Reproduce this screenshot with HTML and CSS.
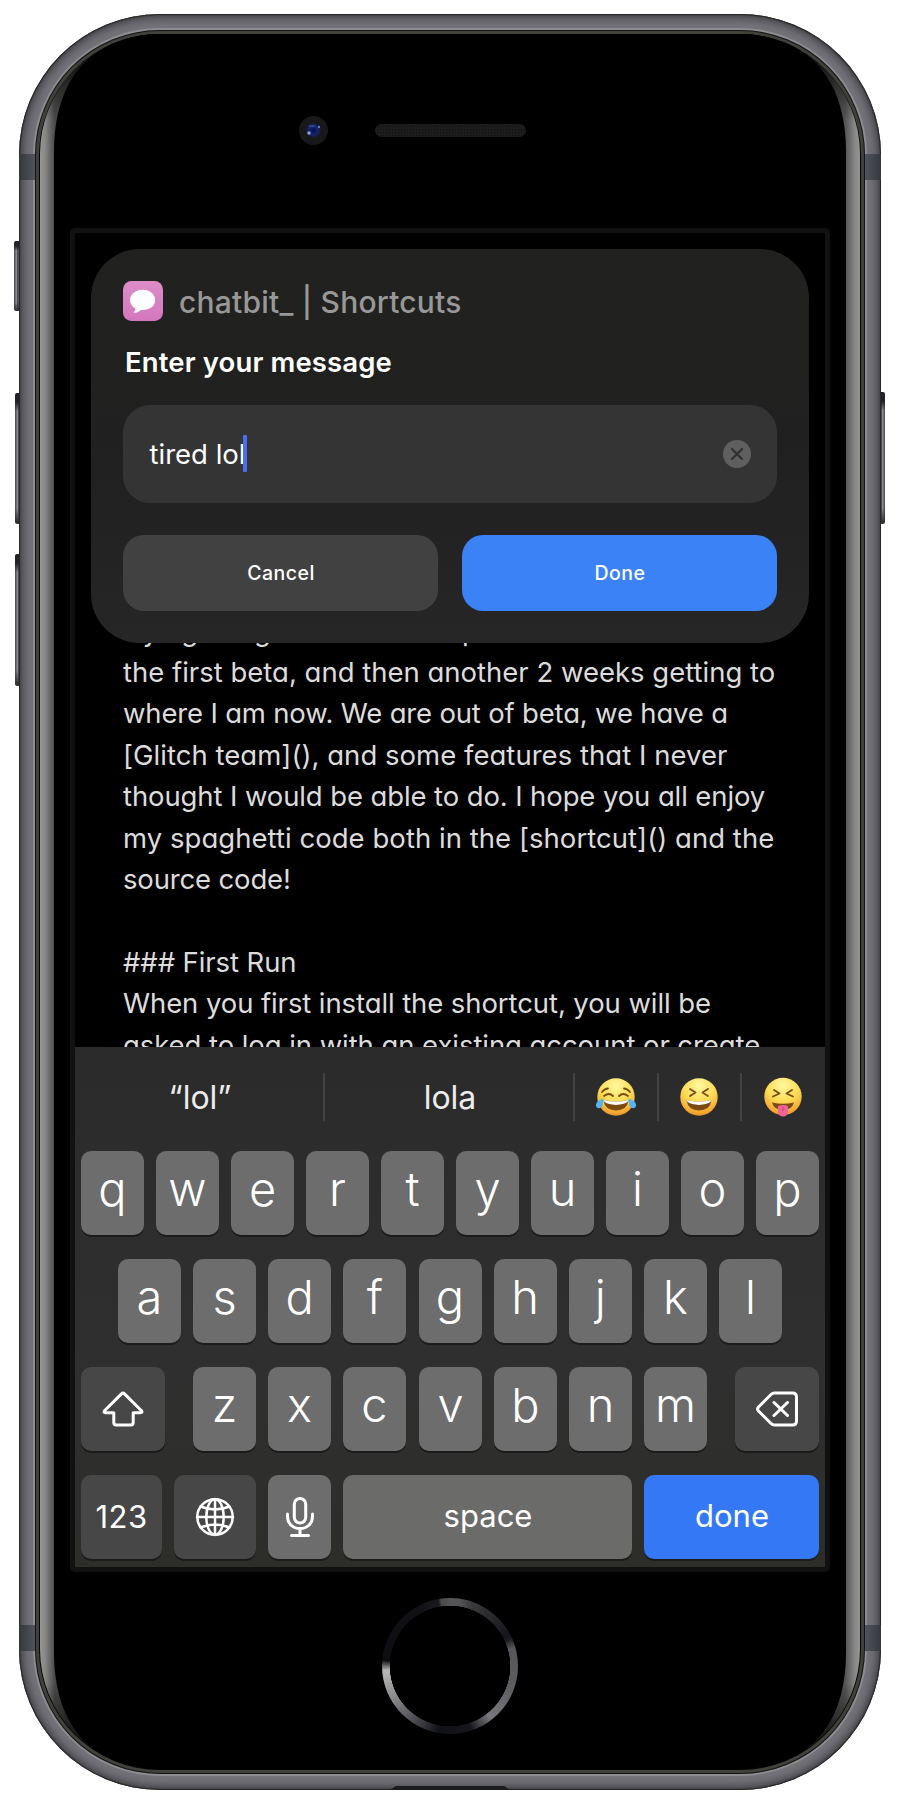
FILE: index.html
```html
<!DOCTYPE html>
<html lang="en">
<head>
<meta charset="utf-8">
<title>chatbit_ | Shortcuts</title>
<link rel="stylesheet" href="styles.css">
</head>
<body>
<div class="phone">
  <i class="side mute"></i><i class="side vol-up"></i><i class="side vol-down"></i><i class="side power"></i>
  <div class="frame"></div>
  <i class="band tl"></i><i class="band tr"></i><i class="band bl"></i><i class="band br"></i>
  <svg class="glass" viewBox="0 0 830 1744" width="830" height="1744">
    <defs>
      <linearGradient id="silver" gradientUnits="userSpaceOnUse" x1="5" y1="0" x2="825" y2="0">
        <stop offset="0" stop-color="#969696"/><stop offset=".006" stop-color="#888"/><stop offset=".018" stop-color="#4a4a4a"/>
        <stop offset=".06" stop-color="#2c2c2c"/><stop offset=".94" stop-color="#2c2c2c"/>
        <stop offset=".982" stop-color="#555"/><stop offset=".994" stop-color="#888"/><stop offset="1" stop-color="#969696"/>
      </linearGradient>
      <linearGradient id="fade" x1="0" y1="0" x2="0" y2="1">
        <stop offset="0" stop-color="#000"/><stop offset=".01" stop-color="#000" stop-opacity=".75"/><stop offset=".05" stop-color="#000" stop-opacity="0"/>
        <stop offset=".95" stop-color="#000" stop-opacity="0"/><stop offset=".99" stop-color="#000" stop-opacity=".75"/><stop offset="1" stop-color="#000"/>
      </linearGradient>
      <radialGradient id="lens"><stop offset="0" stop-color="#061050"/><stop offset=".55" stop-color="#16256c"/><stop offset="1" stop-color="#151a30"/></radialGradient>
      <pattern id="mesh" width="3" height="3" patternUnits="userSpaceOnUse"><rect width="3" height="3" fill="#1d1d1d"/><rect width="1.4" height="1.4" fill="#131313"/></pattern>
    </defs>
    <rect width="830" height="1744" rx="125" fill="#141414"/>
    <rect x="1" y="1" width="828" height="1742" rx="124" fill="#41413b"/>
    <rect x="4" y="4" width="822" height="1736" rx="121" fill="#050505"/>
    <rect x="5" y="4" width="820" height="1735" rx="120" fill="url(#silver)"/>
    <rect x="5" y="4" width="820" height="1735" rx="120" fill="url(#fade)"/>
    <path d="M19 122C19 55 50 10 118 4H712C780 10 811 55 811 122V1622C811 1689 780 1734 712 1739H118C50 1734 19 1689 19 1622Z" fill="#000"/>
    <circle cx="278.500" cy="100.500" r="14.500" fill="#181818"/>
    <circle cx="278.500" cy="100.500" r="7.500" fill="url(#lens)"/>
    <circle cx="274" cy="103" r="1.700" fill="#8ea6d6"/><circle cx="284" cy="97" r="1.200" fill="#4f86ba"/><ellipse cx="277" cy="96" rx="3.500" ry="1.200" fill="#2a4090"/>
    <rect x="340" y="94" width="151" height="13" rx="6.500" fill="url(#mesh)"/>
  </svg>
  <i class="port"></i>

  <div class="screen">
    <div class="content">
      <div class="note">
        <div>trying things out to develop</div>
        <div class="l1">the first beta, and then another 2 weeks getting to</div>
        <div class="l2">where I am now. We are out of beta, we have a</div>
        <div class="l3">[Glitch team](), and some features that I never</div>
        <div class="l4">thought I would be able to do. I hope you all enjoy</div>
        <div class="l5">my spaghetti code both in the [shortcut]() and the</div>
        <div class="l6">source code!</div>
        <div>&nbsp;</div>
        <div class="l7">### First Run</div>
        <div class="l8">When you first install the shortcut, you will be</div>
        <div class="l9">asked to log in with an existing account or create</div>
      </div>
      <div class="card">
        <div class="head">
          <svg class="app" viewBox="0 0 40 40"><defs><linearGradient id="pk" x1="0" y1="0" x2="0" y2="1"><stop offset="0" stop-color="#dd8cc9"/><stop offset="1" stop-color="#d477bd"/></linearGradient></defs><rect width="40" height="40" rx="8.500" fill="url(#pk)"/><path d="M19.800 8.800C12.700 8.800 7 13.200 7 19c0 3.800 2.200 6.700 5.400 8.400.3 1.500-.7 2.500-1.500 3.500-.5.800.2 1.200 1 .9 2.600-.4 4.400-1.600 6-2.900 8.600.5 14.300-3.800 14.300-9.900 0-5.800-5.400-10.200-12.400-10.200z" fill="#fff"/></svg>
          <span class="title">chatbit_ | Shortcuts</span>
        </div>
        <div class="prompt">Enter your message</div>
        <div class="field"><span class="value">tired lol</span><i class="caret"></i>
          <svg class="clear" viewBox="0 0 28 28"><circle cx="14" cy="14" r="14" fill="#5f5f5f"/><path d="M9 9l10 10M19 9L9 19" stroke="#303030" stroke-width="2.200" stroke-linecap="round"/></svg>
        </div>
        <div class="actions"><div class="btn">Cancel</div><div class="btn primary">Done</div></div>
      </div>
    </div>

    <div class="keyboard">
      <div class="suggest">
        <div class="word">“lol”</div><i></i><div class="word w2">lola</div><i></i>
        <div class="emo"><svg width="42" height="40" viewBox="-21 -20 42 40"><defs>
          <radialGradient id="face" cx=".5" cy=".2" r=".85"><stop offset="0" stop-color="#fff8a0"/><stop offset=".5" stop-color="#fddc55"/><stop offset=".85" stop-color="#f3a832"/><stop offset="1" stop-color="#dd8322"/></radialGradient></defs>
          <circle r="18.700" fill="url(#face)"/><path d="M-12.500 3Q0 6 12.500 3Q11 13.500 0 13.500T-12.500 3Z" fill="#7a4a12"/><path d="M-12.500 3Q0 6 12.500 3Q12 7 0 8Q-12 7-12.500 3Z" fill="#fff"/>
          <path d="M-12-1Q-7-5-3-1M3-1Q7-5 12-1M-14-5Q-11-8.500-8-8.500M14-5Q11-8.500 8-8.500" fill="none" stroke="#7a4a12" stroke-width="1.800" stroke-linecap="round"/>
          <path d="M-12.500 1.500C-18 3-20.500 6-20 9c1 3.500 5.500 2.500 6.500-.5.600-2 .8-4.500 1-7zM12.500 1.500C18 3 20.500 6 20 9c-1 3.500-5.500 2.500-6.500-.5-.6-2-.8-4.500-1-7z" fill="#55b5f2"/></svg></div><i></i>
        <div class="emo"><svg width="42" height="40" viewBox="-21 -20 42 40"><circle r="18.700" fill="url(#face)"/><path d="M-12.500 3Q0 6 12.500 3Q11 13.500 0 13.500T-12.500 3Z" fill="#7a4a12"/><path d="M-12.500 3Q0 6 12.500 3Q12 7 0 8Q-12 7-12.500 3Z" fill="#fff"/><path d="M-9-8L-3.500-4.500L-9-1M9-8L3.500-4.500L9-1" fill="none" stroke="#7a4a12" stroke-width="1.800" stroke-linecap="round" stroke-linejoin="round"/></svg></div><i></i>
        <div class="emo"><svg width="42" height="40" viewBox="-21 -20 42 40"><circle r="18.700" cy="-.5" fill="url(#face)"/><path d="M-11 5.500Q0 8 11 5.500Q9 13 0 13T-11 5.500Z" fill="#7a4a12"/><path d="M-5 9Q0 7 5 9V14Q4.500 19.500 0 19.500T-5 14Z" fill="#f0629a"/><path d="M0 10V14" stroke="#c83f78" stroke-width="1"/><path d="M-9-7L-3.500-3.500L-10-.5M9-7L3.500-3.500L10-.5" fill="none" stroke="#7a4a12" stroke-width="1.800" stroke-linecap="round" stroke-linejoin="round"/></svg></div>
      </div>
      <div class="row"><b>q</b><b>w</b><b>e</b><b>r</b><b>t</b><b>y</b><b>u</b><b>i</b><b>o</b><b>p</b></div>
      <div class="row r2"><b>a</b><b>s</b><b>d</b><b>f</b><b>g</b><b>h</b><b>j</b><b>k</b><b>l</b></div>
      <div class="row r3">
        <b class="dark wide"><svg width="42" height="36" viewBox="0 0 42 36"><path d="M19.700 2.600a1.800 1.800 0 0 1 2.600 0L39.500 19.700q1.400 2-1 2H31.200V31.500Q31.200 34 28.700 34H14.300Q11.800 34 11.800 31.500V21.700H3.500q-2.400 0-1-2Z"/></svg></b>
        <div class="mid"><b>z</b><b>x</b><b>c</b><b>v</b><b>b</b><b>n</b><b>m</b></div>
        <b class="dark wide"><svg class="del" width="42" height="36" viewBox="0 0 42 36"><path d="M18.500 2H36.500Q40.500 2 40.500 6V30Q40.500 34 36.500 34H18.500Q16.500 34 15 32.500L2.500 20Q.7 18 2.500 16L15 3.500Q16.500 2 18.500 2ZM18 11.500L31.500 24.500M31.500 11.500L18 24.500"/></svg></b>
      </div>
      <div class="row r4">
        <b class="dark num">123</b>
        <b class="dark globe"><svg width="40" height="40" viewBox="-20 -20 40 40"><g stroke-width="2.500"><circle r="17.700"/><ellipse rx="8.700" ry="17.700"/><path d="M0-18V18M-18 0H18M-14.500-10.500Q0-4.500 14.500-10.500M-14.500 10.500Q0 4.500 14.500 10.500"/></g></svg></b>
        <b class="mic"><svg width="30" height="44" viewBox="-15 -22 30 44"><rect x="-5.700" y="-19.500" width="11.400" height="24.500" rx="5.700"/><path d="M-12.500-4V-2C-12.500 6-7 10.500 0 10.500S12.500 6 12.500-2V-4M0 10.500V17.500M-8.500 17.500H8.500"/></svg></b>
        <b class="space">space</b>
        <b class="done">done</b>
      </div>
    </div>
  </div>
  <div class="home"></div>
</div>
</body>
</html>
```
FILE: styles.css
```css
body { margin: 0; background: #fff; font-family: Inter, "Liberation Sans", sans-serif; overflow: hidden; }
.phone { position: relative; box-sizing: border-box; width: 862px; height: 1776px; margin: 14px 19px; padding: 214px 51px 0; }
.frame { position: absolute; inset: 0; border-radius: 141px; background: #74737a; box-shadow: inset 0 0 1px 1px #242426, inset 0 0 11px 2px #2b2b2e; }
.frame::after { content: ""; position: absolute; inset: 14px; border: 2px solid #8d8d91; border-radius: 127px; }
.glass { position: absolute; left: 16px; top: 16px; }
.side { position: absolute; width: 7px; border-radius: 2px; background: linear-gradient(180deg, #222327 0 7%, transparent 14% 88%, #333438 98%), linear-gradient(90deg, #45464b, #8b8d93 35%, #4b4c51 50%, #63646a); }
.mute { left: -5px; top: 227px; height: 70px; }
.vol-up { left: -4px; top: 379px; height: 131px; }
.vol-down { left: -4px; top: 540px; height: 132px; }
.power { right: -4px; top: 378px; height: 132px; transform: scaleX(-1); }
.band { position: absolute; width: 16px; height: 26px; background: linear-gradient(90deg, #35383d, #50545a); }
.tl, .bl { left: 0; }
.tr, .br { right: 0; transform: scaleX(-1); }
.tl, .tr { top: 140px; }
.bl, .br { top: 1611px; }
.port { position: absolute; left: 371px; top: 1772px; width: 120px; height: 4px; background: #1b1d1c; clip-path: polygon(6px 0, 114px 0, 100% 100%, 0 100%); }

.screen { position: relative; box-sizing: border-box; width: 760px; height: 1344px; border: 5px solid #111; border-radius: 5px; background: #000; display: flex; flex-direction: column; }
.content { position: relative; height: 814px; overflow: hidden; }
.note { padding: 377.600px 0 0 48px; color: #dcdcdc; font-size: 27.5px; line-height: 41.4px; font-feature-settings: "cv11"; }
.note div { white-space: nowrap; }
.l2 { letter-spacing: -.18px; }
.l3 { letter-spacing: .03px; }
.l4 { letter-spacing: -.11px; }
.l5 { letter-spacing: .04px; }
.l6 { letter-spacing: -.16px; }
.l7, .l8 { letter-spacing: -.09px; }
.l9 { letter-spacing: -.07px; }
.card { position: absolute; left: 16px; top: 16px; box-sizing: border-box; width: 718px; height: 394px; padding: 32px; border-radius: 49px; background: linear-gradient(180deg, #21211f, #202020 50%, #262626); color: #fff; }
.head { display: flex; align-items: center; gap: 16px; height: 40px; }
.app { width: 40px; height: 40px; }
.title { padding-top: 1px; color: #989898; font-size: 30px; font-weight: 500; letter-spacing: .22px; white-space: pre; }
.prompt { height: 84px; padding-left: 2px; font-size: 27.5px; font-weight: 600; line-height: 83px; letter-spacing: .13px; }
.field { display: flex; align-items: center; height: 98px; padding: 0 26px 0 26.500px; border-radius: 27px; background: #343434; font-size: 27.5px; }
.caret { width: 4px; height: 37px; margin: -2px 0 0 -2.500px; border-radius: 1px; background: #4d6df0; }
.clear { width: 28px; height: 28px; margin-left: auto; }
.actions { display: flex; gap: 24px; margin-top: 32px; }
.btn { flex: 1; height: 76px; border-radius: 21px; background: #414141; text-align: center; font-size: 19.500px; font-weight: 500; line-height: 76px; letter-spacing: .5px; text-indent: 1px; }
.primary { background: #3b82f7; }

.keyboard { height: 520px; background: linear-gradient(180deg, #2b2b2b, #2f2f2f 60%, #2d2d2a); color: #fff; }
.suggest { display: flex; align-items: center; height: 100px; color: #ececec; font-size: 32px; }
.suggest i { width: 2px; height: 48px; background: #434343; }
.word { width: 248px; text-align: center; text-indent: 2px; }
.suggest .emo { width: 81.500px; text-align: center; line-height: 0; }
.row { display: flex; gap: 12px; margin: 4px 6px 24px; height: 84px; }
.row b { box-sizing: border-box; width: 63px; height: 84px; border-radius: 10px; background: #6d6d6d; box-shadow: 0 2px 0 #1b1b1b; text-align: center; font-size: 47px; font-weight: 330; line-height: 76px; }
.r2 { margin: 0 43px 24px; justify-content: space-between; }
.r3 { margin: 0 6px 24px; justify-content: space-between; }
.mid { display: flex; gap: 12px; }
.mid b:nth-child(4) { margin-left: 1px; }
.row b.dark { background: #474747; }
.row b.wide { width: 84px; }
.row svg { fill: none; stroke: #fff; stroke-width: 3; stroke-linecap: round; stroke-linejoin: round; display: block; margin: 24px auto; }
.r4 { margin: 0 6px; }
.row b.num { width: 81px; font-size: 31px; font-weight: 400; line-height: 84px; letter-spacing: .5px; }
.row b.globe { width: 82px; }
.globe svg { margin: 22px auto; }
.mic svg { margin: 21px auto; }
.row b.space, .row b.done { font-size: 31px; font-weight: 380; line-height: 82px; text-indent: 1px; }
.row b.space { width: 289px; background: #6b6b69; }
.row b.done { width: 175px; background: #3478f6; }
.home { position: relative; box-sizing: border-box; width: 136px; height: 136px; margin: 26px auto 0; border-radius: 50%; background: radial-gradient(circle, #000 60px, transparent 60.500px), conic-gradient(#555557 0 8deg, #3a3a3c 20deg, #15151b 62deg, #1c1c22 66deg, #56565a 74deg, #5d5d62 110deg, #77777c 142deg, #15151a 162deg, #101017 190deg, #38383e 205deg, #88888c 240deg, #b8b8b8 266deg, #0c0c12 275deg, #101015 325deg, #19191d 350deg, #4a4a4c 352deg, #555557); }
```
